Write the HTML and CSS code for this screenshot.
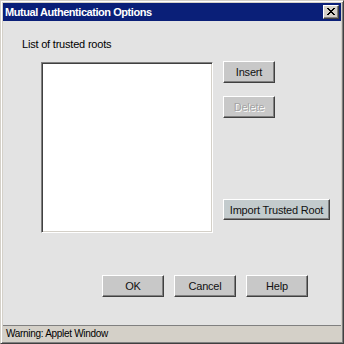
FILE: index.html
```html
<!DOCTYPE html>
<html lang="en">
<head>
    <meta charset="UTF-8">
    <meta name="viewport" content="width=device-width, initial-scale=1.0">
    <title>Mutual Authentication Options</title>
    <link rel="stylesheet" href="styles.css">
</head>
<body>
    <div class="window">
        <div class="titlebar">
            <span class="title">Mutual Authentication Options</span>
            <button class="close-btn" aria-label="Close">
                <svg width="8" height="7" viewBox="0 0 8 7">
                    <path d="M0 0h2v1h1v1h2V1h1V0h2v1H7v1H6v1H5v1h1v1h1v1h1v1H6V6H5V5H3v1H2v1H0V6h1V5h1V4h1V3H2V2H1V1H0z" fill="#000"/>
                </svg>
            </button>
        </div>

        <div class="content">
            <p class="list-label">List of trusted roots</p>

            <div class="roots-row">
                <div class="roots-list"></div>
                <div class="roots-actions">
                    <button class="btn btn-side">Insert</button>
                    <button class="btn btn-side btn-delete" disabled>Delete</button>
                    <button class="btn btn-import">Import Trusted Root</button>
                </div>
            </div>

            <div class="dialog-buttons">
                <button class="btn btn-dialog">OK</button>
                <button class="btn btn-dialog">Cancel</button>
                <button class="btn btn-dialog">Help</button>
            </div>
        </div>

        <div class="statusbar">Warning: Applet Window</div>
    </div>
</body>
</html>
```

FILE: styles.css
```css
:root {
    --face: #d4d0c8;
    --shadow: #808080;
    --dark-shadow: #404040;
    --highlight: #fff;
    --title-bg: #0a1f78;
    --content-bg: #e3e3e3;
    --button-bg: #c8c8c8;
}

* {
    margin: 0;
    padding: 0;
    box-sizing: border-box;
}

body {
    font-family: "Liberation Sans", Arial, sans-serif;
    font-size: 11px;
    color: #000;
    background: #fff;
}

.window {
    width: 344px;
    height: 344px;
    display: flex;
    flex-direction: column;
    background: var(--face);
    border: 1px solid;
    border-color: var(--face) var(--dark-shadow) var(--dark-shadow) var(--face);
    box-shadow: inset 1px 1px var(--highlight), inset -1px -1px var(--shadow);
    padding: 2px;
}

.titlebar {
    height: 18px;
    display: flex;
    align-items: center;
    justify-content: space-between;
    background: var(--title-bg);
    padding: 0 2px 0 2px;
}

.title {
    color: #fff;
    font-weight: bold;
    font-size: 11px;
    letter-spacing: -0.45px;
}

.close-btn {
    width: 16px;
    height: 14px;
    display: flex;
    align-items: center;
    justify-content: center;
    background: var(--face);
    border: 1px solid;
    border-color: var(--highlight) var(--dark-shadow) var(--dark-shadow) var(--highlight);
    box-shadow: inset -1px -1px var(--shadow);
    padding-bottom: 1px;
}

.content {
    flex: 1;
    background: var(--content-bg);
    padding: 16px 0 0 19px;
}

.list-label {
    line-height: 14px;
    letter-spacing: -0.2px;
}

.roots-row {
    display: flex;
    gap: 10px;
    margin-top: 11px;
    padding-left: 19px;
}

.roots-list {
    width: 172px;
    height: 171px;
    background: #fff;
    border: 1px solid;
    border-color: var(--shadow) var(--highlight) var(--highlight) var(--shadow);
    box-shadow: inset 1px 1px var(--dark-shadow), inset -1px -1px var(--face);
}

.roots-actions {
    display: flex;
    flex-direction: column;
    align-items: flex-start;
    margin-top: -1px;
}

.btn {
    height: 22px;
    font-family: "Liberation Sans", Arial, sans-serif;
    font-size: 11px;
    letter-spacing: -0.2px;
    color: #111;
    background: var(--button-bg);
    border: 1px solid;
    border-color: var(--highlight) var(--dark-shadow) var(--dark-shadow) var(--highlight);
    box-shadow: inset -1px -1px var(--shadow);
}

.btn-side {
    width: 52px;
}

.btn-delete {
    margin-top: 13px;
    color: #a4a4a4;
    text-shadow: 1px 1px #fff;
}

.btn-import {
    width: 107px;
    height: 21px;
    margin-top: 81px;
    background: #c3cbcd;
}

.dialog-buttons {
    display: flex;
    gap: 10px;
    margin-top: 42px;
    padding-left: 80px;
}

.btn-dialog {
    width: 62px;
}

.statusbar {
    height: 16px;
    background: var(--face);
    border-top: 1px solid var(--shadow);
    padding: 1px 0 0 3px;
    font-size: 10px;
    line-height: 13px;
    letter-spacing: -0.3px;
}
```
